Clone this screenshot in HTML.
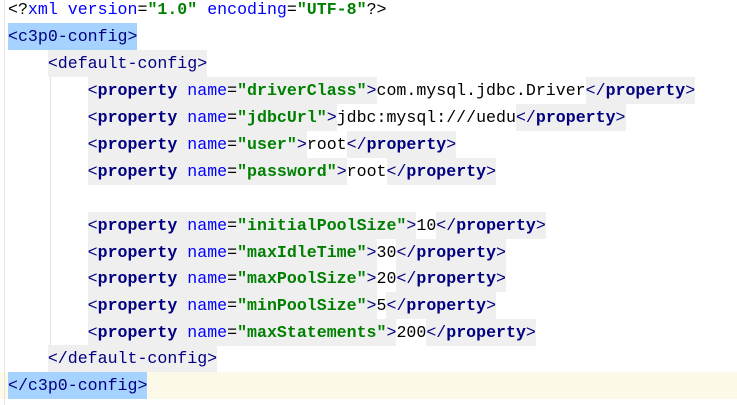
<!DOCTYPE html>
<html><head><style>
body{margin:0;width:737px;height:405px;background:#fff;overflow:hidden;position:relative;font-family:"Liberation Mono",monospace;font-size:16.6px;}
.l{position:absolute;left:8px;height:27px;line-height:27px;white-space:pre;}
.g{background:#efefef;display:inline-block;height:27px;}
.t{color:#000080}
.b{font-weight:bold}
.a{color:#0000ff}
.v{color:#008000;font-weight:bold}
.h{background:#a6d2ff;display:inline-block;height:27px}
.guide{position:absolute;width:1px;background:#e0e0e0}
</style></head><body>
<div style="position:absolute;left:0;top:372px;width:737px;height:27px;background:#fdf9e8"></div>
<div style="position:absolute;left:4px;top:0;width:1px;height:405px;background:#e4e4e4"></div>
<div class="guide" style="left:50px;top:76px;height:270px"></div>
<div class="l" style="top:-4px">&lt;?<span class="a">xml version</span>=<span class="v">"1.0"</span> <span class="a">encoding</span>=<span class="v">"UTF-8"</span>?&gt;</div>
<div class="l" style="top:23px"><span class="h"><span class="t">&lt;c3p0-config&gt;</span></span></div>
<div class="l" style="top:50px">    <span class="g"><span class="t">&lt;default-config&gt;</span></span></div>
<div class="l" style="top:77px">        <span class="g"><span class="t">&lt;<span class="b">property</span> </span><span class="a">name</span>=<span class="v">"driverClass"</span><span class="t">&gt;</span></span>com.mysql.jdbc.Driver<span class="g"><span class="t">&lt;/<span class="b">property</span>&gt;</span></span></div>
<div class="l" style="top:104px">        <span class="g"><span class="t">&lt;<span class="b">property</span> </span><span class="a">name</span>=<span class="v">"jdbcUrl"</span><span class="t">&gt;</span></span>jdbc:mysql:///uedu<span class="g"><span class="t">&lt;/<span class="b">property</span>&gt;</span></span></div>
<div class="l" style="top:131px">        <span class="g"><span class="t">&lt;<span class="b">property</span> </span><span class="a">name</span>=<span class="v">"user"</span><span class="t">&gt;</span></span>root<span class="g"><span class="t">&lt;/<span class="b">property</span>&gt;</span></span></div>
<div class="l" style="top:158px">        <span class="g"><span class="t">&lt;<span class="b">property</span> </span><span class="a">name</span>=<span class="v">"password"</span><span class="t">&gt;</span></span>root<span class="g"><span class="t">&lt;/<span class="b">property</span>&gt;</span></span></div>
<div class="l" style="top:212px">        <span class="g"><span class="t">&lt;<span class="b">property</span> </span><span class="a">name</span>=<span class="v">"initialPoolSize"</span><span class="t">&gt;</span></span>10<span class="g"><span class="t">&lt;/<span class="b">property</span>&gt;</span></span></div>
<div class="l" style="top:239px">        <span class="g"><span class="t">&lt;<span class="b">property</span> </span><span class="a">name</span>=<span class="v">"maxIdleTime"</span><span class="t">&gt;</span></span>30<span class="g"><span class="t">&lt;/<span class="b">property</span>&gt;</span></span></div>
<div class="l" style="top:265px">        <span class="g"><span class="t">&lt;<span class="b">property</span> </span><span class="a">name</span>=<span class="v">"maxPoolSize"</span><span class="t">&gt;</span></span>20<span class="g"><span class="t">&lt;/<span class="b">property</span>&gt;</span></span></div>
<div class="l" style="top:292px">        <span class="g"><span class="t">&lt;<span class="b">property</span> </span><span class="a">name</span>=<span class="v">"minPoolSize"</span><span class="t">&gt;</span></span>5<span class="g"><span class="t">&lt;/<span class="b">property</span>&gt;</span></span></div>
<div class="l" style="top:319px">        <span class="g"><span class="t">&lt;<span class="b">property</span> </span><span class="a">name</span>=<span class="v">"maxStatements"</span><span class="t">&gt;</span></span>200<span class="g"><span class="t">&lt;/<span class="b">property</span>&gt;</span></span></div>
<div class="l" style="top:345px">    <span class="g"><span class="t">&lt;/default-config&gt;</span></span></div>
<div class="l" style="top:372px"><span class="h"><span class="t">&lt;/c3p0-config&gt;</span></span></div>
</body></html>
